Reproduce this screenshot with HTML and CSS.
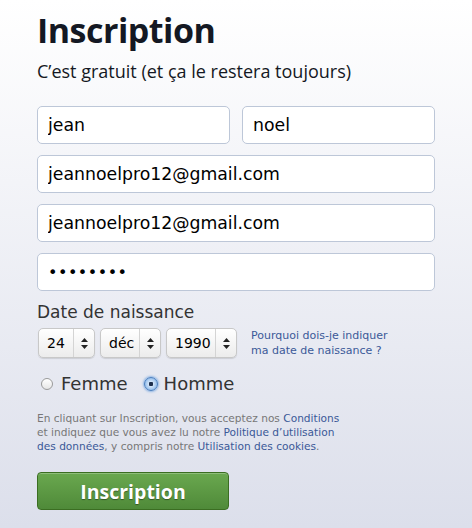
FILE: index.html
```html
<!DOCTYPE html>
<html lang="fr">
<head>
    <meta charset="UTF-8">
    <title>Inscription</title>
    <link rel="stylesheet" href="styles.css">
</head>
<body>
    <div class="signup">
        <h1>Inscription</h1>
        <p class="subtitle">C’est gratuit (et ça le restera toujours)</p>

        <form class="signup-form">
            <div class="row">
                <input type="text" class="field" value="jean">
                <input type="text" class="field" value="noel">
            </div>
            <input type="text" class="field" value="jeannoelpro12@gmail.com">
            <input type="text" class="field" value="jeannoelpro12@gmail.com">
            <input type="password" class="field" value="12345678">

            <div class="birthday">
                <div class="label">Date de naissance</div>
                <div class="birthday-row">
                    <div class="select s-day"><span class="val">24</span><span class="arrows"><svg width="7" height="11" viewBox="0 0 7 11"><path d="M3.5 0L7 4H0z M3.5 11L7 7H0z" fill="#222"/></svg></span></div>
                    <div class="select s-month"><span class="val">déc</span><span class="arrows"><svg width="7" height="11" viewBox="0 0 7 11"><path d="M3.5 0L7 4H0z M3.5 11L7 7H0z" fill="#222"/></svg></span></div>
                    <div class="select s-year"><span class="val">1990</span><span class="arrows"><svg width="7" height="11" viewBox="0 0 7 11"><path d="M3.5 0L7 4H0z M3.5 11L7 7H0z" fill="#222"/></svg></span></div>
                    <a href="#" class="why">Pourquoi dois-je indiquer<br>ma date de naissance ?</a>
                </div>
            </div>

            <div class="gender">
                <label class="radio"><span class="dot"></span>Femme</label>
                <label class="radio"><span class="dot checked"></span>Homme</label>
            </div>

            <p class="terms">En cliquant sur Inscription, vous acceptez nos <a href="#">Conditions</a><br>
            et indiquez que vous avez lu notre <a href="#">Politique d’utilisation<br>
            des données</a>, y compris notre <a href="#">Utilisation des cookies</a>.</p>

            <button type="submit" class="submit-btn">Inscription</button>
        </form>
    </div>
</body>
</html>
```

FILE: styles.css
```css
* { margin: 0; padding: 0; box-sizing: border-box; }
html, body { height: 100%; }
body { background: linear-gradient(#ffffff, #dcdfeb); color: #141823; font-family: "DejaVu Sans", sans-serif; }
.signup { padding: 10px 37px 0 37px; width: 435px; }
h1 { font-family: "Open Sans", sans-serif; font-weight: 700; font-size: 34px; line-height: 40px; color: #141823; letter-spacing: -0.5px; }
.subtitle { font-family: "Open Sans", sans-serif; font-size: 18px; line-height: 24px; margin-top: 9px; color: #141823; }
.signup-form { display: flex; flex-direction: column; gap: 11px; margin-top: 23px; width: 398px; }
.row { display: flex; gap: 12px; }
.field { width: 100%; height: 38px; border: 1px solid #bdc7d8; border-radius: 5px; background: #fff; padding: 0 10px; font-family: "DejaVu Sans", sans-serif; font-size: 17.3px; color: #000; outline: none; }
.row .field { flex: 1; min-width: 0; }
input[type="password"] { font-size: 16px; letter-spacing: 0.5px; }
.birthday { margin-top: -1px; }
.label { font-size: 17px; color: #333; line-height: 22px; margin-bottom: 5px; }
.birthday-row { display: flex; align-items: center; gap: 5px; padding-left: 1px; }
.select { display: flex; align-items: center; height: 30px; border: 1px solid #c8c8c8; border-radius: 5px; background: linear-gradient(#ffffff, #ececec); box-shadow: 0 1px 1px rgba(0,0,0,0.12); font-size: 14px; color: #000; padding-left: 8px; }
.val { flex: 1; }
.arrows { width: 21px; height: 100%; border-left: 1px solid #d4d4d4; display: flex; align-items: center; justify-content: center; }
.s-day { width: 57px; }
.s-month { width: 61px; }
.s-year { width: 71px; }
.why { margin-left: 9px; font-size: 11px; line-height: 15px; color: #3b5998; text-decoration: none; }
.gender { display: flex; gap: 16px; margin-top: 4px; padding-left: 4px; }
.radio { display: flex; align-items: center; font-size: 18px; color: #333; }
.dot { width: 12px; height: 12px; border-radius: 50%; border: 1px solid #9a9a9a; background: linear-gradient(#ffffff, #e6e6e6); margin-right: 8px; }
.dot.checked { width: 14px; height: 14px; border: 1px solid #4a7fbf; background: radial-gradient(circle, #1d2f4d 0, #1d2f4d 2px, #cfe3f8 2.5px, #8ab6e8 7px); box-shadow: 0 0 2px 1px rgba(90,150,220,0.6); margin-right: 6px; }
.terms { font-size: 10.6px; line-height: 14px; color: #777; margin-top: 6px; }
.terms a { color: #3b5998; text-decoration: none; }
.submit-btn { width: 192px; height: 38px; margin-top: 8px; border: 1px solid #3b6e22; border-radius: 4px; background: linear-gradient(#6aa84f, #4f8a39); box-shadow: inset 0 1px 0 rgba(255,255,255,0.25); color: #fff; font-family: "Open Sans", sans-serif; font-weight: 700; font-size: 19.5px; text-shadow: 0 1px 1px rgba(0,0,0,0.4); cursor: pointer; }
```
